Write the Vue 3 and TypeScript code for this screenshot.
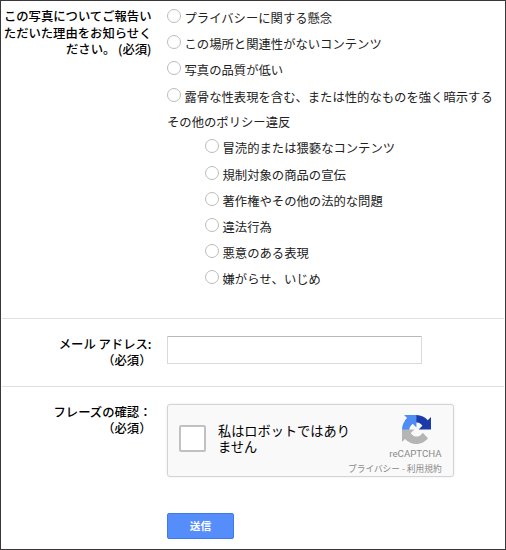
<script setup lang="ts">
import { ref } from 'vue'

const mainReasons: string[] = [
  'プライバシーに関する懸念',
  'この場所と関連性がないコンテンツ',
  '写真の品質が低い',
  '露骨な性表現を含む、または性的なものを強く暗示する',
]
const policyReasons: string[] = [
  '冒涜的または猥褻なコンテンツ',
  '規制対象の商品の宣伝',
  '著作権やその他の法的な問題',
  '違法行為',
  '悪意のある表現',
  '嫌がらせ、いじめ',
]
const reason = ref<string>('')
const email = ref<string>('')
</script>

<template>
  <form class="page" @submit.prevent>
    <section class="row reasons">
      <div class="label">この写真についてご報告い<br />ただいた理由をお知らせく<br />ださい。 (必須)</div>
      <div class="field">
        <label v-for="r in mainReasons" :key="r" class="option">
          <input v-model="reason" type="radio" name="reason" :value="r" /><span>{{ r }}</span>
        </label>
        <div class="group-title">その他のポリシー違反</div>
        <div class="subgroup">
          <label v-for="r in policyReasons" :key="r" class="option">
            <input v-model="reason" type="radio" name="reason" :value="r" /><span>{{ r }}</span>
          </label>
        </div>
      </div>
    </section>

    <section class="row email">
      <div class="label">メール アドレス:<br />（必須）</div>
      <div class="field"><input v-model="email" class="text" type="text" /></div>
    </section>

    <section class="row phrase">
      <div class="label">フレーズの確認：<br />（必須）</div>
      <div class="field">
        <div class="captcha">
          <span class="check"></span>
          <div class="statement">私はロボットではあり<br />ません</div>
          <div class="brand">
            <svg class="logo" viewBox="0 0 64 64">
              <path fill="#1c3aa9" d="M64 31.955l-.033-1.37V4.687l-7.16 7.16C50.948 4.674 42.033.093 32.05.093c-10.39 0-19.622 4.96-25.458 12.64l11.736 11.86a15.55 15.55 0 0 1 4.754-5.334c2.05-1.6 4.952-2.906 8.968-2.906.485 0 .86.057 1.135.163 4.976.393 9.288 3.14 11.828 7.124l-8.307 8.307L64 31.953" />
              <path fill="#4f8df5" d="M31.862.094l-1.37.033H4.594l7.16 7.16C4.58 13.147 0 22.06 0 32.046c0 10.39 4.96 19.622 12.64 25.458L24.5 45.768a15.55 15.55 0 0 1-5.334-4.754c-1.6-2.05-2.906-4.952-2.906-8.968 0-.485.057-.86.163-1.135.393-4.976 3.14-9.288 7.124-11.828l8.307 8.307L31.86.095" />
              <path fill="#b5b5b5" d="M.001 32.045l.033 1.37v25.898l7.16-7.16c5.86 7.173 14.774 11.754 24.76 11.754 10.39 0 19.622-4.96 25.458-12.64l-11.736-11.86a15.55 15.55 0 0 1-4.754 5.334c-2.05 1.6-4.952 2.906-8.968 2.906-.485 0-.86-.057-1.135-.163-4.976-.393-9.288-3.14-11.828-7.124l8.307-8.307c-10.522.04-22.4.066-27.295-.005" />
            </svg>
            <div class="name">reCAPTCHA</div>
            <div class="links">プライバシー - 利用規約</div>
          </div>
        </div>
        <button class="submit" type="submit">送信</button>
      </div>
    </section>
  </form>
</template>

<style>
body {
  background: #fff;
}
</style>

<style scoped>
.page {
  box-sizing: border-box;
  width: 506px;
  height: 550px;
  border: 1px solid #3a3739;
  overflow: hidden;
  font-family: 'Noto Sans CJK JP', sans-serif;
  font-size: 12.33px;
  color: #222;
  white-space: nowrap;
}
.row {
  display: flex;
  box-sizing: border-box;
  margin: 0 1px;
}
.label {
  box-sizing: border-box;
  width: 149.5px;
  flex: none;
  text-align: right;
  font-weight: 500;
  line-height: 16.4px;
  color: #000;
}
.field {
  margin-left: 15.5px;
}
.reasons {
  height: 317px;
}
.reasons .label {
  padding-top: 7px;
  line-height: 16.5px;
}
.reasons .field {
  padding-top: 4px;
}
.option {
  display: flex;
  align-items: center;
  height: 26.2px;
}
.option input {
  appearance: none;
  box-sizing: border-box;
  width: 14px;
  height: 14px;
  margin: 0 3.5px 4px 0;
  border: 1px solid #bcbcbc;
  border-radius: 50%;
  background: #fff;
}
.group-title {
  height: 25.6px;
  line-height: 24.6px;
}
.subgroup {
  padding-left: 38px;
}
.email {
  height: 68px;
  border-top: 1px solid #e0e0e0;
}
.email .label {
  padding-top: 17px;
}
.email .field {
  padding-top: 17px;
}
.text {
  display: block;
  box-sizing: border-box;
  width: 255px;
  height: 28px;
  padding: 1px 8px;
  border: 1px solid #d9d9d9;
  border-top-color: #b9b9b9;
  border-radius: 1px;
}
.phrase {
  border-top: 1px solid #e0e0e0;
}
.phrase .label,
.phrase .field {
  padding-top: 17px;
}
.captcha {
  display: flex;
  box-sizing: border-box;
  width: 287px;
  height: 73px;
  border: 1px solid #d3d3d3;
  border-radius: 3px;
  background: #f9f9f9;
  box-shadow: 0 0 3px rgba(0, 0, 0, 0.08);
}
.check {
  box-sizing: border-box;
  flex: none;
  width: 27px;
  height: 27px;
  margin: 20px 0 0 11px;
  border: 2px solid #c1c1c1;
  border-radius: 2px;
  background: #fff;
}
.statement {
  flex: none;
  width: 130px;
  margin: 18px 0 0 12px;
  font-size: 13.2px;
  line-height: 16px;
  color: #000;
}
.brand {
  display: flex;
  flex: 1;
  flex-direction: column;
  align-items: flex-end;
  padding-right: 11.5px;
  color: #8a8a8a;
}
.logo {
  width: 29px;
  height: 29px;
  margin: 10px 10.5px 0 0;
}
.name {
  margin-top: 4px;
  font-family: Roboto, sans-serif;
  font-size: 9.7px;
  line-height: 12px;
}
.links {
  margin-top: 2px;
  font-size: 8.7px;
  line-height: 13px;
}
.submit {
  display: block;
  box-sizing: border-box;
  width: 67px;
  height: 26px;
  margin-top: 36px;
  padding: 0;
  border: 1px solid #3d7bed;
  border-radius: 2px;
  background: #558dfb;
  color: #fff;
  font-family: inherit;
  font-size: 10.7px;
  font-weight: 700;
  line-height: 24px;
}
</style>
